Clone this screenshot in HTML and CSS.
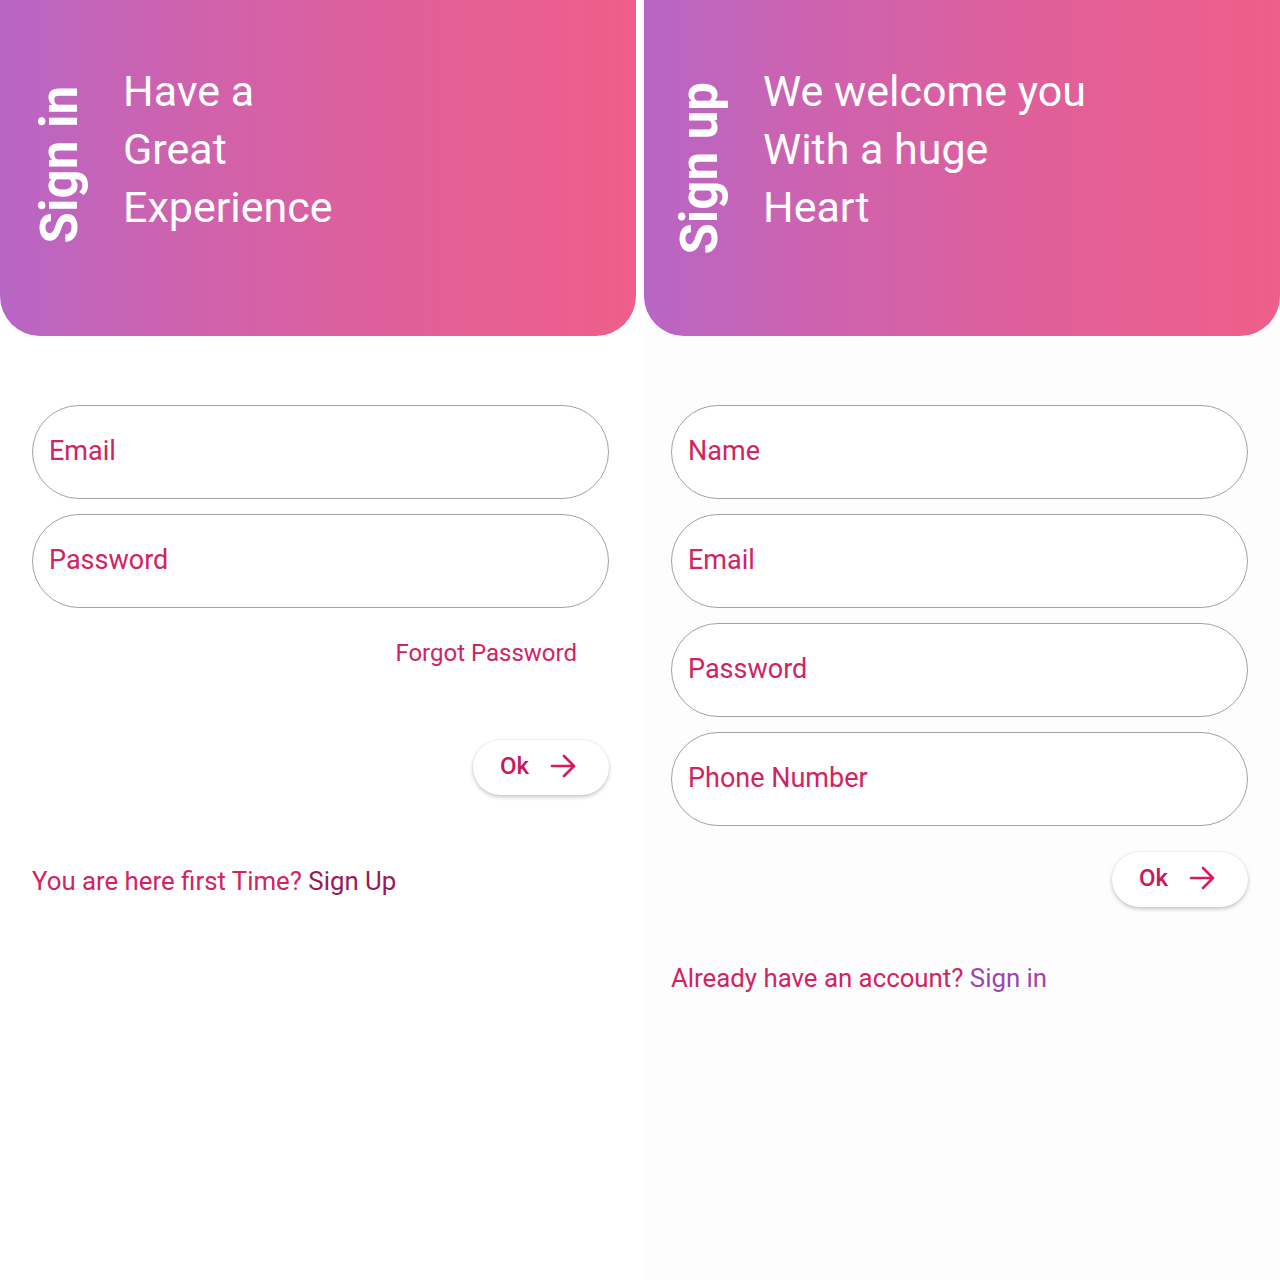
FILE: index.html
```html
<!DOCTYPE html>
<html>
<head>
<meta charset="utf-8">
<link rel="stylesheet" href="styles.css">
</head>
<body>
<div class="screen">
  <section class="panel panel-left">
    <header class="hero">
      <div class="hero-label">Sign in</div>
      <div class="hero-text">Have a<br>Great<br>Experience</div>
    </header>
    <div class="form">
      <div class="fields">
        <div class="field">Email</div>
        <div class="field">Password</div>
      </div>
      <div class="forgot">Forgot Password</div>
      <div class="actions actions-left">
        <button class="ok">Ok
          <svg class="arrow" width="28" height="28" viewBox="0 0 28 28"><path d="M3 14 H25 M15 4 L25 14 L15 24" fill="none" stroke="currentColor" stroke-width="2.6" stroke-linecap="round" stroke-linejoin="round"/></svg>
        </button>
      </div>
      <p class="switch switch-left">You are here first Time? <span class="switch-link">Sign Up</span></p>
    </div>
  </section>
  <section class="panel panel-right">
    <header class="hero hero-right">
      <div class="hero-label">Sign up</div>
      <div class="hero-text">We welcome you<br>With a huge<br>Heart</div>
    </header>
    <div class="form form-right">
      <div class="fields">
        <div class="field">Name</div>
        <div class="field">Email</div>
        <div class="field">Password</div>
        <div class="field">Phone Number</div>
      </div>
      <div class="actions actions-right">
        <button class="ok">Ok
          <svg class="arrow" width="28" height="28" viewBox="0 0 28 28"><path d="M3 14 H25 M15 4 L25 14 L15 24" fill="none" stroke="currentColor" stroke-width="2.6" stroke-linecap="round" stroke-linejoin="round"/></svg>
        </button>
      </div>
      <p class="switch switch-right">Already have an account? <span class="switch-link purple">Sign in</span></p>
    </div>
  </section>
</div>
</body>
</html>
```

FILE: styles.css
```css
* { box-sizing: border-box; }
html, body { margin: 0; padding: 0; background: #ffffff; }
body { font-family: Roboto, "Noto Sans", sans-serif; }

.screen {
  display: grid;
  grid-template-columns: 636px 636px;
  column-gap: 8px;
  width: 1280px;
  height: 1280px;
}

.panel { background: #ffffff; }
.panel-right { background: #fdfdfd; }

.hero {
  height: 336px;
  border-radius: 0 0 40px 40px;
  background: linear-gradient(to right, #b866c5 0%, #cf62ad 30%, #e15f98 65%, #f05e8a 100%);
  display: flex;
  align-items: flex-start;
  padding: 62px 0 0 35px;
  color: #ffffff;
}
.hero-right { padding-left: 31px; }

.hero-label {
  writing-mode: vertical-rl;
  transform: rotate(180deg);
  font-size: 51px;
  line-height: 50px;
  font-weight: 700;
  margin-top: 24px;
  white-space: nowrap;
}
.hero-right .hero-label { margin-top: 20px; font-size: 51px; }

.hero-text {
  font-size: 43px;
  line-height: 58px;
  margin-left: 38px;
  font-weight: 400;
}
.hero-right .hero-text { margin-left: 38px; }

.form {
  padding: 69px 27px 0 32px;
  display: flex;
  flex-direction: column;
}
.form-right { padding: 69px 32px 0 27px; }

.fields {
  display: flex;
  flex-direction: column;
  gap: 15px;
}

.field {
  height: 94px;
  border: 1.5px solid #a3a3a3;
  border-radius: 47px;
  display: flex;
  align-items: center;
  padding: 0 0 3px 16px;
  font-size: 27px;
  color: #d3235f;
  background: #ffffff;
}

.forgot {
  align-self: flex-end;
  margin: 30px 32px 0 0;
  font-size: 24px;
  line-height: 30px;
  color: #d3235f;
}

.actions { display: flex; justify-content: flex-end; }
.actions-left { margin-top: 72px; }
.actions-right { margin-top: 26px; }

.ok {
  width: 136px;
  height: 55px;
  border: none;
  border-radius: 28px;
  background: #ffffff;
  box-shadow: 0 2px 4px rgba(0,0,0,0.22), 0 0 2px rgba(0,0,0,0.08);
  display: flex;
  align-items: center;
  padding: 0 0 3px 27px;
  gap: 20px;
  font-family: Roboto, sans-serif;
  font-size: 24px;
  font-weight: 500;
  color: #c8195c;
}
.arrow { color: #d81b60; }

.switch {
  margin: 0;
  font-size: 25.8px;
  line-height: 30px;
  color: #d3235f;
}
.switch-left { margin-top: 71px; }
.switch-right { margin-top: 56px; }
.switch-link { color: #9a1a54; }
.switch-link.purple { color: #9c46ad; }
```
